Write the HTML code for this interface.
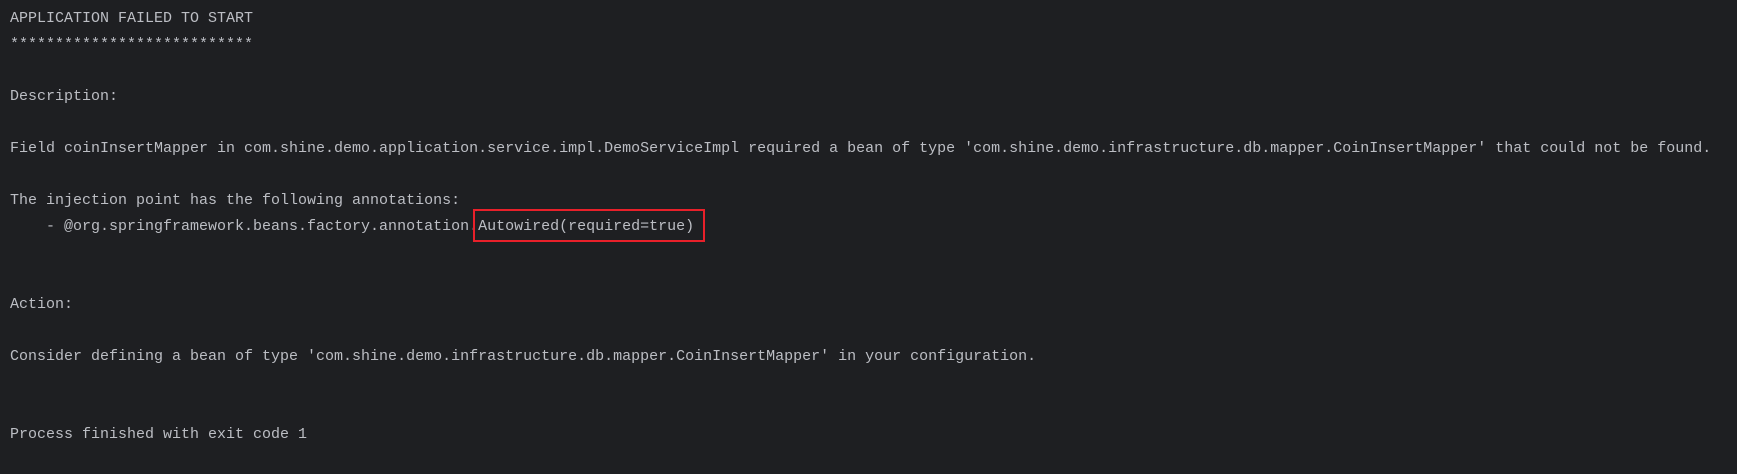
<!DOCTYPE html>
<html><head><meta charset="utf-8"><style>
html,body{margin:0;padding:0;background:#1e1f22;width:1737px;height:474px;overflow:hidden}
pre{margin:0;position:absolute;left:10px;top:6px;font-family:"Liberation Mono",monospace;font-size:15px;line-height:26px;color:#bcbec4}
.box{position:absolute;left:473px;top:209px;width:232px;height:33px;border:2px solid #e8202a;box-sizing:border-box}
</style></head><body>
<pre>APPLICATION FAILED TO START
***************************

Description:

Field coinInsertMapper in com.shine.demo.application.service.impl.DemoServiceImpl required a bean of type 'com.shine.demo.infrastructure.db.mapper.CoinInsertMapper' that could not be found.

The injection point has the following annotations:
    - @org.springframework.beans.factory.annotation.Autowired(required=true)


Action:

Consider defining a bean of type 'com.shine.demo.infrastructure.db.mapper.CoinInsertMapper' in your configuration.


Process finished with exit code 1</pre>
<div class="box"></div>
</body></html>
